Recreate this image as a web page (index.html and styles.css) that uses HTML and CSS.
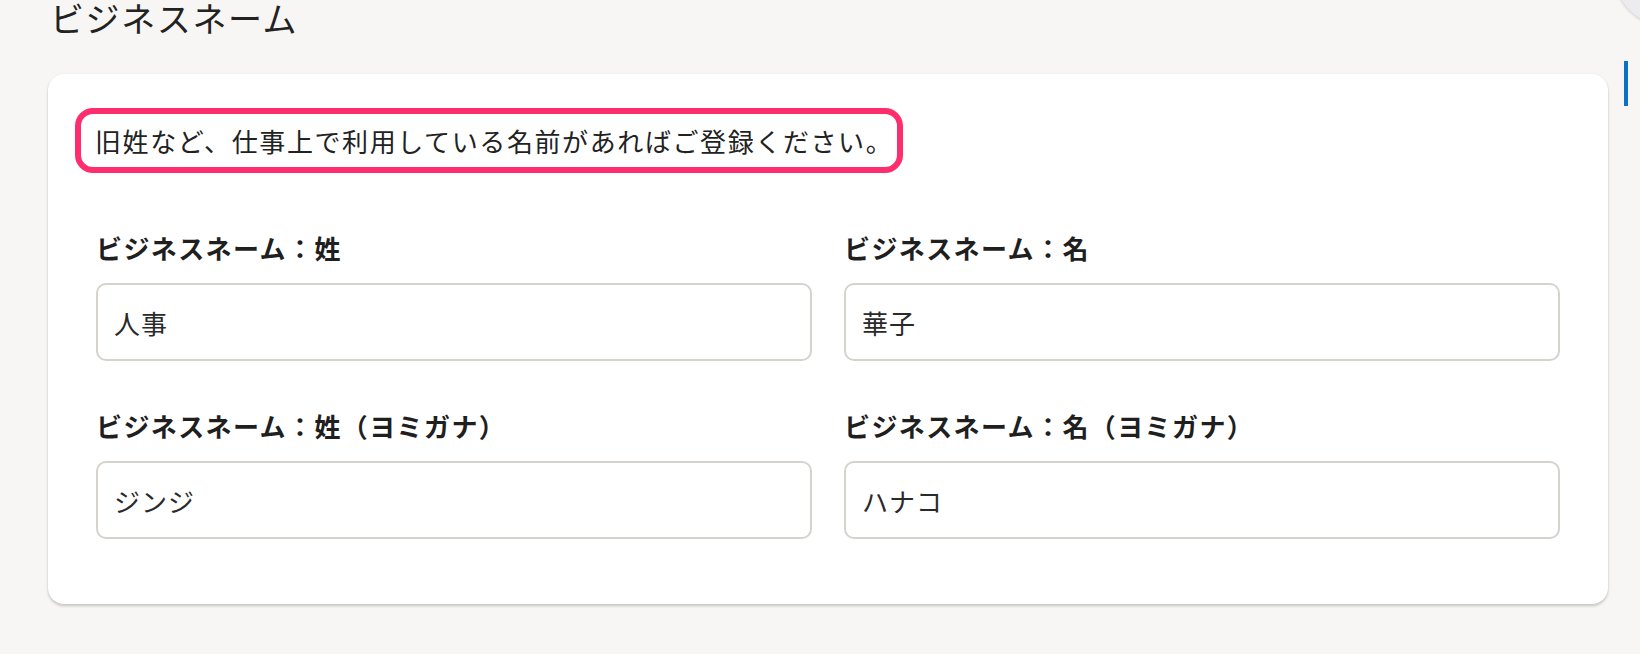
FILE: index.html
```html
<!DOCTYPE html>
<html lang="ja">
<head>
<meta charset="utf-8">
<title>ビジネスネーム</title>
<link rel="stylesheet" href="styles.css">
</head>
<body>
<div class="float-btn"></div>
<div class="scroll-mark"></div>
<h1 class="page-title">ビジネスネーム</h1>
<section class="card">
  <p class="note">旧姓など、仕事上で利用している名前があればご登録ください。</p>
  <div class="fields">
    <label class="field">
      <span class="field-label">ビジネスネーム：姓</span>
      <input class="field-input" type="text" value="人事">
    </label>
    <label class="field">
      <span class="field-label">ビジネスネーム：名</span>
      <input class="field-input" type="text" value="華子">
    </label>
    <label class="field">
      <span class="field-label">ビジネスネーム：姓（ヨミガナ）</span>
      <input class="field-input" type="text" value="ジンジ">
    </label>
    <label class="field">
      <span class="field-label">ビジネスネーム：名（ヨミガナ）</span>
      <input class="field-input" type="text" value="ハナコ">
    </label>
  </div>
</section>
</body>
</html>
```
FILE: styles.css
```css
* { box-sizing: border-box; }

html, body { height: 100%; }

body {
  margin: 0;
  padding: 0 32px 0 48px;
  background: #f7f6f4;
  color: #222;
  font-family: "Noto Sans CJK JP", "Noto Sans", sans-serif;
  overflow: hidden;
  position: relative;
}

.page-title {
  margin: 0 0 38px;
  padding-left: 2px;
  font-size: 34px;
  line-height: 36px;
  font-weight: 400;
  letter-spacing: 1.6px;
  color: #222;
}

.card {
  background: #fff;
  border-radius: 16px;
  box-shadow: 0 2px 3px rgba(0, 0, 0, 0.2), 0 0 1px rgba(0, 0, 0, 0.08);
  padding: 34px 48px 65px 48px;
}

.note {
  display: inline-block;
  margin: 0 0 57px -21px;
  padding: 9px 4px 8px 14px;
  border: 6px solid #fe2e6e;
  border-radius: 18px;
  font-size: 26px;
  line-height: 36px;
  letter-spacing: 1.6px;
  color: #222;
}

.fields {
  display: grid;
  grid-template-columns: 1fr 1fr;
  column-gap: 32px;
  row-gap: 47px;
}

.field {
  display: flex;
  flex-direction: column;
}

.field-label {
  font-size: 26px;
  line-height: 36px;
  font-weight: 700;
  letter-spacing: 1.4px;
  color: #1f1f1f;
  margin-bottom: 17px;
}

.field-input {
  display: block;
  width: 100%;
  height: 78px;
  margin: 0;
  padding: 0 16px;
  border: 2px solid #d6d3cf;
  border-radius: 10px;
  background: #fff;
  font-family: "Noto Sans CJK JP", "Noto Sans", sans-serif;
  font-size: 26px;
  letter-spacing: 1px;
  color: #2a2a2a;
  outline: none;
}

.scroll-mark {
  position: absolute;
  left: 1624px;
  top: 61px;
  width: 4px;
  height: 45px;
  background: #0a72c7;
}

.float-btn {
  position: absolute;
  left: 1615px;
  top: -75px;
  width: 100px;
  height: 100px;
  border-radius: 50%;
  background: #ececee;
  box-shadow: 0 1px 3px rgba(0, 0, 0, 0.18);
}
```
